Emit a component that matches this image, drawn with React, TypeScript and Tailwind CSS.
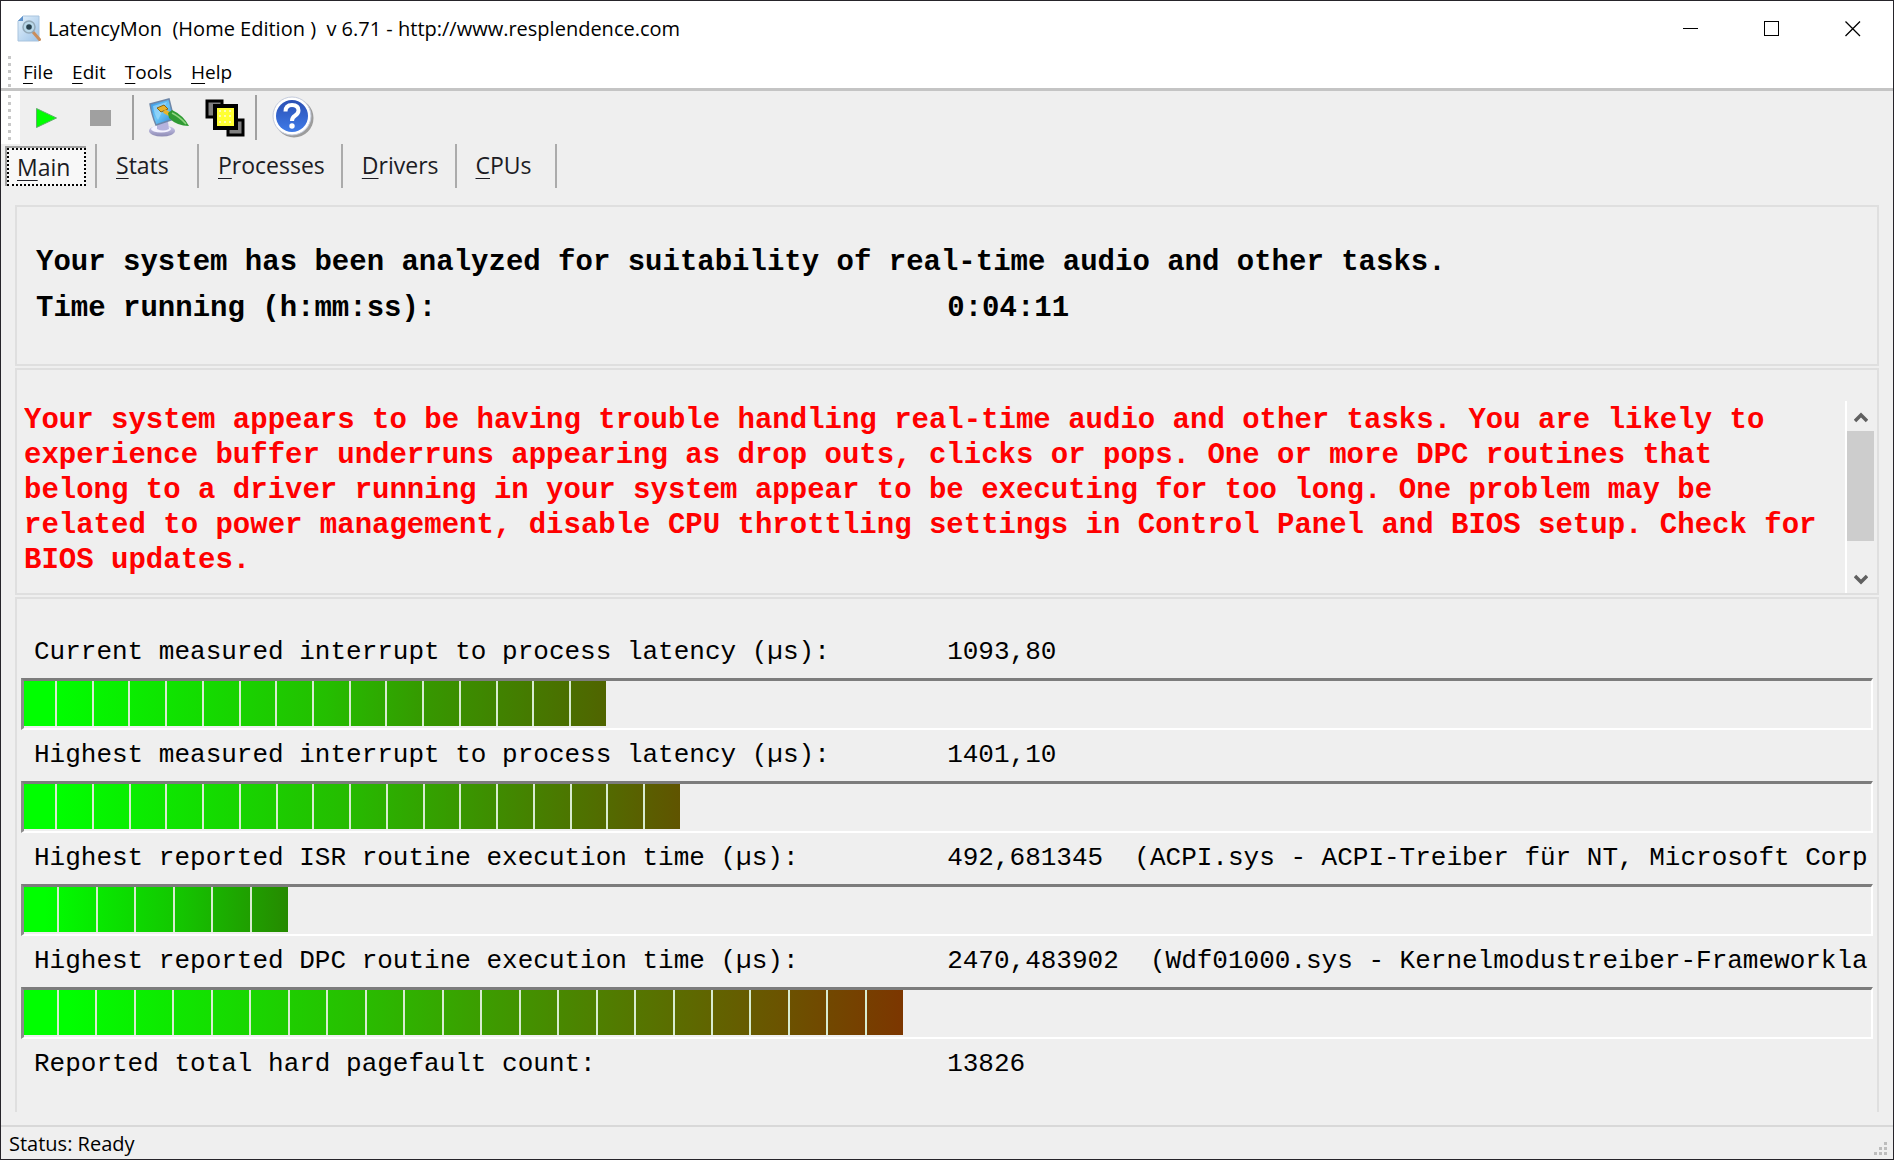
import React from "react";

const menuItems = ["File", "Edit", "Tools", "Help"];
const tabs = ["Stats", "Processes", "Drivers", "CPUs"];

type Meter = {
  label: string;
  value: string;
  percent: number;
  segments: number;
  gradient: string;
  firstSegment: string;
};

const meters: Meter[] = [
  {
    label: "Current measured interrupt to process latency (µs):",
    value: "1093,80",
    percent: 31.5,
    segments: 16,
    gradient: "bg-[linear-gradient(to_right,#00ff00_5%,#24be00_52%,#379600_70%,#506400)]",
    firstSegment: "w-[33px]",
  },
  {
    label: "Highest measured interrupt to process latency (µs):",
    value: "1401,10",
    percent: 35.5,
    segments: 18,
    gradient: "bg-[linear-gradient(to_right,#00ff00_5%,#24be00_48%,#3f8c00_72%,#605400)]",
    firstSegment: "w-[33px]",
  },
  {
    label: "Highest reported ISR routine execution time (µs):",
    value: "492,681345  (ACPI.sys - ACPI-Treiber für NT, Microsoft Corp",
    percent: 14.3,
    segments: 7,
    gradient: "bg-[linear-gradient(to_right,#00ff00_8%,#14c400_60%,#268a00)]",
    firstSegment: "w-[35px]",
  },
  {
    label: "Highest reported DPC routine execution time (µs):",
    value: "2470,483902  (Wdf01000.sys - Kernelmodustreiber-Frameworkla",
    percent: 47.6,
    segments: 23,
    gradient: "bg-[linear-gradient(to_right,#00ff00_5%,#28be00_38%,#4a8600_62%,#665c00_82%,#7c3600)]",
    firstSegment: "w-[35px]",
  },
];

const warning =
  "Your system appears to be having trouble handling real-time audio and other tasks. You are likely to experience buffer underruns appearing as drop outs, clicks or pops. One or more DPC routines that belong to a driver running in your system appear to be executing for too long. One problem may be related to power management, disable CPU throttling settings in Control Panel and BIOS setup. Check for BIOS updates.";

function Mnemonic({ text }: { text: string }) {
  return (
    <span>
      <span className="underline decoration-1 underline-offset-4">{text[0]}</span>
      {text.slice(1)}
    </span>
  );
}

function Grip() {
  return (
    <div className="ml-[7px] w-[3px] self-stretch bg-[repeating-linear-gradient(to_bottom,#c8c8c8_0,#c8c8c8_3px,transparent_3px,transparent_7px)]" />
  );
}

function AppIcon() {
  return (
    <svg width="24" height="27" viewBox="0 0 24 27" aria-hidden="true">
      <defs>
        <linearGradient id="page" x1="0" y1="0" x2="1" y2="1">
          <stop offset="0" stopColor="#e4f1fb" />
          <stop offset="1" stopColor="#9dc3e8" />
        </linearGradient>
      </defs>
      <path d="M6 1h16v25H1V6z" fill="url(#page)" stroke="#a9c4de" />
      <path d="M6 1v5H1z" fill="#5f92cc" />
      <path d="M16 17l6.500 7.500" stroke="#c98d5c" strokeWidth="3" strokeLinecap="round" />
      <circle cx="12" cy="12" r="6" fill="#b9d8ea" stroke="#93a9b8" strokeWidth="1.500" />
      <circle cx="12" cy="12" r="2.800" fill="#263f4c" />
    </svg>
  );
}

function MonitorIcon() {
  return (
    <svg width="42" height="40" viewBox="0 0 42 40" aria-hidden="true">
      <defs>
        <linearGradient id="screen" x1="0" y1="0" x2="1" y2="1">
          <stop offset="0" stopColor="#2f8fe0" />
          <stop offset="0.500" stopColor="#6cc6f7" />
          <stop offset="1" stopColor="#2a7fd0" />
        </linearGradient>
        <linearGradient id="base" x1="0" y1="0" x2="0" y2="1">
          <stop offset="0" stopColor="#cfcdf0" />
          <stop offset="1" stopColor="#8d8ab4" />
        </linearGradient>
      </defs>
      <ellipse cx="15" cy="33" rx="13" ry="5.500" fill="url(#base)" />
      <ellipse cx="14" cy="31" rx="10" ry="3.500" fill="#f4f3ff" />
      <path d="M10 24h11l1 7q-6 3-12 0z" fill="#b6b3de" />
      <path d="M3 6L22 1l5 20-18 6q-4-9-6-21z" fill="url(#screen)" stroke="#6d86a8" strokeWidth="1.500" />
      <path d="M6 8l14-4-9 18q-4-6-5-14z" fill="#a8e0fb" opacity="0.600" />
      <path d="M10 10l7-3 4 4-7 3z" fill="#e8b32c" stroke="#8a6410" />
      <path d="M17 13l7 4" stroke="#e8b32c" strokeWidth="4" />
      <path d="M21 15l4-3q11 5 17 16-12 0-20-8z" fill="#2f9a33" />
      <path d="M25 15q8 4 14 11" stroke="#8ed47e" strokeWidth="1.500" fill="none" />
    </svg>
  );
}

function SquaresIcon() {
  return (
    <svg width="40" height="38" viewBox="0 0 40 38" aria-hidden="true">
      <rect x="2" y="2" width="15" height="16" fill="#808080" stroke="#000" strokeWidth="3" />
      <rect x="23" y="21" width="15" height="15" fill="#808080" stroke="#000" strokeWidth="3" />
      <rect x="10" y="7" width="21" height="22" fill="#ffff33" stroke="#000" strokeWidth="4" />
      <path
        d="M14 11h2v2h-2zM19 11h2v2h-2zM24 11h2v2h-2zM14 16h2v2h-2zM19 16h2v2h-2zM24 16h2v2h-2zM14 22h2v2h-2zM19 22h2v2h-2zM24 22h2v2h-2z"
        fill="#fffbb0"
      />
    </svg>
  );
}

function HelpIcon() {
  return (
    <svg width="42" height="43" viewBox="0 0 42 43" aria-hidden="true">
      <defs>
        <linearGradient id="ball" x1="0" y1="0" x2="0" y2="1">
          <stop offset="0" stopColor="#2a4fb4" />
          <stop offset="1" stopColor="#3f7be8" />
        </linearGradient>
      </defs>
      <circle cx="22" cy="22" r="19.500" fill="#9c9c9c" />
      <circle cx="20" cy="20" r="19" fill="#fff" stroke="#c4cbdc" />
      <circle cx="20" cy="20" r="16" fill="url(#ball)" />
      <path d="M13.500 15.500q0-6.500 6.500-6.500 6.500 0 6.500 5.500 0 3-3.500 5.200-3 1.800-3 5.300" fill="none" stroke="#fff" strokeWidth="4" />
      <circle cx="20" cy="30" r="2.700" fill="#fff" />
    </svg>
  );
}

function LatencyMeter({ meter }: { meter: Meter }) {
  return (
    <>
      <div className="grid h-[51px] grid-cols-[49.6%_1fr] items-center pl-[17px]">
        <span className="whitespace-pre">{meter.label}</span>
        <span className="whitespace-pre">{meter.value}</span>
      </div>
      <div
        role="meter"
        aria-label={meter.label}
        aria-valuenow={meter.percent}
        className="mr-[2px] ml-1 h-[52px] border-t-3 border-r-2 border-b-2 border-l-3 border-t-[#7c7c7c] border-r-white border-b-white border-l-[#8c8c8c] pb-[2px]"
      >
        <div className={`flex h-full ${meter.gradient}`} style={{ width: `${meter.percent}%` }}>
          <div className={`${meter.firstSegment} border-r-2 border-[#d8ecd0]`} />
          {Array.from({ length: meter.segments - 1 }, (_, i) => (
            <div key={i} className="flex-1 border-r-2 border-[#d8ecd0] last:border-r-0" />
          ))}
        </div>
      </div>
    </>
  );
}

export default function App() {
  return (
    <div className="flex min-h-screen flex-col border border-[#26242a] bg-[#efefef] font-['Open_Sans',sans-serif] text-black">
      <header className="border-b-3 border-[#c4c4c4] bg-white">
        <div className="flex h-[55px] items-center">
          <div className="ml-4">
            <AppIcon />
          </div>
          <h1 className="ml-[7px] flex-1 text-[20px] whitespace-pre">
            LatencyMon  (Home Edition )  v 6.71 - http://www.resplendence.com
          </h1>
          <button aria-label="Minimize" className="flex h-full w-[81px] items-center justify-center">
            <svg width="16" height="16" viewBox="0 0 16 16" shapeRendering="crispEdges">
              <path d="M0 7.500h15" stroke="#000" />
            </svg>
          </button>
          <button aria-label="Maximize" className="flex h-full w-[81px] items-center justify-center">
            <svg width="16" height="16" viewBox="0 0 16 16" shapeRendering="crispEdges">
              <path d="M.5.500h14v14H.5z" fill="none" stroke="#000" />
            </svg>
          </button>
          <button aria-label="Close" className="flex h-full w-[81px] items-center justify-center">
            <svg width="16" height="16" viewBox="0 0 16 16">
              <path d="M.5.500l14.500 14.500M15 .5L.5 15" fill="none" stroke="#000" strokeWidth="1.300" />
            </svg>
          </button>
        </div>
        <nav className="flex h-8 items-center">
          <Grip />
          <div className="ml-3 flex gap-[19px] text-[19px] leading-7">
            {menuItems.map((item) => (
              <button key={item}>
                <Mnemonic text={item} />
              </button>
            ))}
          </div>
        </nav>
      </header>

      <div className="flex h-[53px] items-center">
        <div className="flex w-[19px] self-stretch bg-white py-1">
          <Grip />
        </div>
        <button aria-label="Start" className="ml-4">
          <svg width="21" height="20" viewBox="0 0 21 20">
            <path d="M.5.500L20.500 10 .5 19.500z" fill="#00ff00" stroke="#5fae6a" />
          </svg>
        </button>
        <button aria-label="Stop" className="ml-[33px]">
          <div className="h-4 w-[21px] bg-[#a0a0a0]" />
        </button>
        <div className="ml-[21px] h-[45px] w-[2px] bg-[#a0a0a0]" />
        <button aria-label="Options" className="ml-[13px]">
          <MonitorIcon />
        </button>
        <button aria-label="Windows" className="ml-4">
          <SquaresIcon />
        </button>
        <div className="ml-[10px] h-[45px] w-[2px] bg-[#a0a0a0]" />
        <button aria-label="Help" className="ml-[15px]">
          <HelpIcon />
        </button>
      </div>

      <div role="tablist" className="flex h-11 items-center pl-1 text-[23px] leading-8 text-[#1c1c24]">
        <button
          role="tab"
          aria-selected="true"
          className="mr-[9px] border-t-2 border-l-2 border-[#a0a0a0]"
        >
          <span className="flex h-[38px] w-[79px] items-center border-2 border-dotted border-black bg-[#f8f8f8] pl-2">
            <Mnemonic text="Main" />
          </span>
        </button>
        {tabs.map((tab) => (
          <button
            key={tab}
            role="tab"
            aria-selected="false"
            className="flex h-11 min-w-[102px] items-center border-l-2 border-[#ababab] pr-4 pb-[2px] pl-[19px] last:border-r-2"
          >
            <Mnemonic text={tab} />
          </button>
        ))}
      </div>

      <main className="flex flex-1 flex-col gap-[2px] px-[14px] pt-[17px] pb-[13px] font-['Liberation_Mono',monospace]">
        <section className="h-[161px] border-2 border-[#dfdfdf] pt-[33px] pl-[19px] text-[29px] leading-[46px] font-bold">
          <p className="whitespace-pre">
            Your system has been analyzed for suitability of real-time audio and other tasks.
          </p>
          <div className="grid grid-cols-[49.5%_1fr]">
            <span>Time running (h:mm:ss):</span>
            <span>0:04:11</span>
          </div>
        </section>

        <section className="flex h-[227px] border-2 border-[#dfdfdf] pt-[31px] pr-[3px] pl-[7px]">
          <textarea
            readOnly
            aria-label="Analysis conclusion"
            value={warning}
            className="mr-5 block h-[192px] flex-1 resize-none overflow-hidden pt-[2px] text-[29px] leading-[35px] font-bold text-[#ff0000] outline-none"
          />
          <div className="flex w-[29px] flex-col border-l-2 border-white">
            <button aria-label="Scroll up" className="flex h-[30px] items-center justify-center pt-[2px]">
              <svg width="14" height="12" viewBox="0 0 14 12">
                <path d="M1 10l6-6 6 6" fill="none" stroke="#606060" strokeWidth="3.500" />
              </svg>
            </button>
            <div className="h-[110px] bg-[#cdcdcd]" />
            <div className="flex-1" />
            <button aria-label="Scroll down" className="flex h-7 items-center justify-center">
              <svg width="14" height="12" viewBox="0 0 14 12">
                <path d="M1 3l6 6 6-6" fill="none" stroke="#606060" strokeWidth="3.500" />
              </svg>
            </button>
          </div>
        </section>

        <section className="flex-1 border-x-2 border-t-2 border-[#dfdfdf] pt-7 pr-[2px] text-[26px]">
          {meters.map((meter) => (
            <LatencyMeter key={meter.label} meter={meter} />
          ))}
          <div className="grid h-[51px] grid-cols-[49.6%_1fr] items-center pl-[17px]">
            <span>Reported total hard pagefault count:</span>
            <span>13826</span>
          </div>
        </section>
      </main>

      <footer className="flex h-[34px] items-center border-t-2 border-[#d8d8d8] pt-[2px] pr-1 pl-2 text-[20px] leading-7">
        <span className="flex-1">Status: Ready</span>
        <svg width="16" height="16" viewBox="0 0 16 16" className="mb-[2px] self-end" aria-hidden="true">
          <path d="M11 1h3v3h-3zM6 6h3v3H6zM11 6h3v3h-3zM1 11h3v3H1zM6 11h3v3H6zM11 11h3v3h-3z" fill="#bdbdbd" />
        </svg>
      </footer>
    </div>
  );
}
